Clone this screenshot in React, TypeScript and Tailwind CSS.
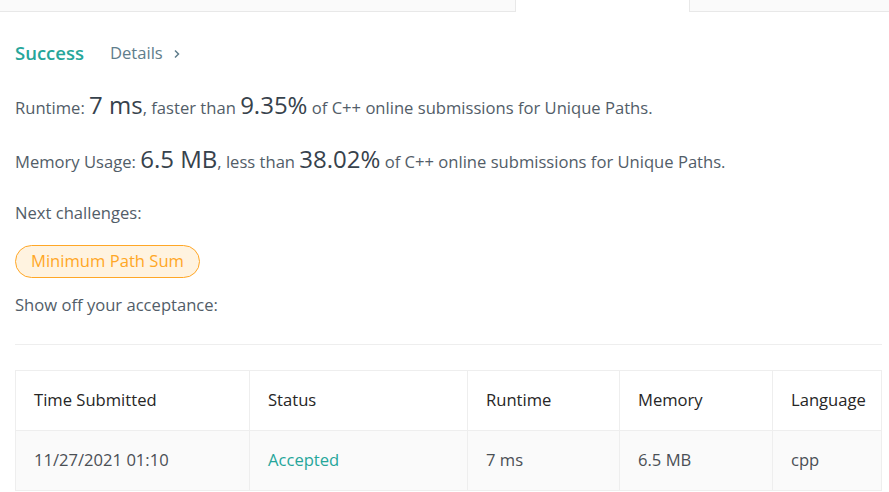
import React from "react";

const rows = [
  { time: "11/27/2021 01:10", status: "Accepted", runtime: "7 ms", memory: "6.5 MB", lang: "cpp" },
];

const cols = [
  { label: "Time Submitted", w: "w-[234px]" },
  { label: "Status", w: "w-[218px]" },
  { label: "Runtime", w: "w-[152px]" },
  { label: "Memory", w: "w-[153px]" },
  { label: "Language", w: "" },
];

const App = () => {
  return (
    <div className="min-h-screen bg-white text-[16.6px] text-[#525d68]" style={{ fontFamily: '"Open Sans", "Noto Sans", sans-serif' }}>
      {/* Tab bar (scrolled off) */}
      <div className="flex h-[12px]">
        <div className="w-[516px] bg-[#fafafa] border-b border-r border-[#e8e8e8]" />
        <div className="w-[173px]" />
        <div className="flex-1 bg-[#fafafa] border-b border-l border-[#e8e8e8]" />
      </div>

      <div className="pl-[15px] pr-[7px]">
        {/* Result header */}
        <div className="mt-[29px] flex h-[24px] items-center">
          <span className="text-[18.5px] font-semibold text-[#26a69a]">Success</span>
          <span className="ml-[26px] text-[#607d8b]">Details</span>
          <svg className="ml-[10px] mt-[2px]" width="8" height="10" viewBox="0 0 8 10" fill="none">
            <path d="M2 1.5 L5.5 5 L2 8.5" stroke="#607d8b" strokeWidth="1.5" />
          </svg>
        </div>

        <p className="mt-[25px] leading-[30px]">
          Runtime: <span className="text-[24px] text-[#37424c]">7 ms</span>, faster than{" "}
          <span className="text-[24px] text-[#37424c]">9.35%</span> of C++ online submissions for Unique Paths.
        </p>

        <p className="mt-[21px] leading-[30px]">
          Memory Usage: <span className="text-[24px] text-[#37424c]">6.5 MB</span>, less than{" "}
          <span className="text-[24px] text-[#37424c]">38.02%</span> of C++ online submissions for Unique Paths.
        </p>

        <p className="mt-[24px] leading-[24px]">Next challenges:</p>

        <div className="mt-[20px] flex">
          <span className="flex h-[33px] items-center rounded-full border border-[#ffa726] bg-[#fff3e0] px-[15px] text-[#ffa726]">
            Minimum Path Sum
          </span>
        </div>

        <p className="mt-[15px] leading-[24px]">Show off your acceptance:</p>

        <div className="mt-[27px] border-t border-[#eeeeee]" />

        {/* Submission table */}
        <table className="mt-[25px] w-full border-collapse border border-[#eeeeee]">
          <thead>
            <tr className="h-[60px]">
              {cols.map((c) => (
                <th key={c.label} className={`${c.w} border border-[#eeeeee] pl-[18px] text-left font-normal text-[#262626]`}>
                  {c.label}
                </th>
              ))}
            </tr>
          </thead>
          <tbody>
            {rows.map((r, idx) => (
              <tr key={idx} className="h-[60px] bg-[#fafafa] text-[#4a4f55]">
                <td className="border border-[#eeeeee] pl-[18px]">{r.time}</td>
                <td className="border border-[#eeeeee] pl-[18px] text-[#26a69a]">{r.status}</td>
                <td className="border border-[#eeeeee] pl-[18px]">{r.runtime}</td>
                <td className="border border-[#eeeeee] pl-[18px]">{r.memory}</td>
                <td className="border border-[#eeeeee] pl-[18px]">{r.lang}</td>
              </tr>
            ))}
          </tbody>
        </table>
      </div>
    </div>
  );
};

export default App;
